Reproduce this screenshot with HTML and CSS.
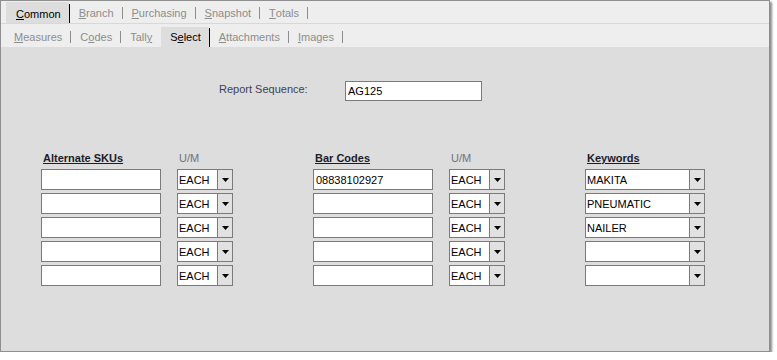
FILE: index.html
```html
<!DOCTYPE html>
<html lang="en">
<head>
  <meta charset="UTF-8" />
  <title>Item - Select</title>
  <link rel="stylesheet" href="styles.css">
</head>
<body>
  <div class="window">
    <div class="tabrow row1">
      <span class="tab active first"><u>C</u>ommon</span><span class="sep dark"></span>
      <span class="tab"><u>B</u>ranch</span><span class="sep"></span>
      <span class="tab"><u>P</u>urchasing</span><span class="sep"></span>
      <span class="tab"><u>S</u>napshot</span><span class="sep"></span>
      <span class="tab"><u>T</u>otals</span><span class="sep"></span>
    </div>
    <div class="tabrow row2">
      <span class="tab"><u>M</u>easures</span><span class="sep"></span>
      <span class="tab">C<u>o</u>des</span><span class="sep"></span>
      <span class="tab">Tall<u>y</u></span><span class="sep hide"></span>
      <span class="tab active">S<u>e</u>lect</span><span class="sep dark"></span>
      <span class="tab"><u>A</u>ttachments</span><span class="sep"></span>
      <span class="tab"><u>I</u>mages</span><span class="sep"></span>
    </div>

    <div class="panel">
      <div class="report">
        <label for="seq">Report Sequence:</label>
        <input id="seq" class="tb seq" value="AG125" readonly />
      </div>

      <div class="grid">
        <div class="hdr">Alternate SKUs</div>
        <div class="um">U/M</div>
        <div class="hdr">Bar Codes</div>
        <div class="um">U/M</div>
        <div class="hdr">Keywords</div>

        <input class="tb" value="" readonly />
        <div class="combo"><span class="val">EACH</span><span class="btn"><svg width="7" height="4" viewBox="0 0 7 4"><polygon points="0,0 7,0 3.5,4" /></svg></span></div>
        <input class="tb" value="08838102927" readonly />
        <div class="combo"><span class="val">EACH</span><span class="btn"><svg width="7" height="4" viewBox="0 0 7 4"><polygon points="0,0 7,0 3.5,4" /></svg></span></div>
        <div class="combo wide"><span class="val">MAKITA</span><span class="btn"><svg width="7" height="4" viewBox="0 0 7 4"><polygon points="0,0 7,0 3.5,4" /></svg></span></div>

        <input class="tb" value="" readonly />
        <div class="combo"><span class="val">EACH</span><span class="btn"><svg width="7" height="4" viewBox="0 0 7 4"><polygon points="0,0 7,0 3.5,4" /></svg></span></div>
        <input class="tb" value="" readonly />
        <div class="combo"><span class="val">EACH</span><span class="btn"><svg width="7" height="4" viewBox="0 0 7 4"><polygon points="0,0 7,0 3.5,4" /></svg></span></div>
        <div class="combo wide"><span class="val">PNEUMATIC</span><span class="btn"><svg width="7" height="4" viewBox="0 0 7 4"><polygon points="0,0 7,0 3.5,4" /></svg></span></div>

        <input class="tb" value="" readonly />
        <div class="combo"><span class="val">EACH</span><span class="btn"><svg width="7" height="4" viewBox="0 0 7 4"><polygon points="0,0 7,0 3.5,4" /></svg></span></div>
        <input class="tb" value="" readonly />
        <div class="combo"><span class="val">EACH</span><span class="btn"><svg width="7" height="4" viewBox="0 0 7 4"><polygon points="0,0 7,0 3.5,4" /></svg></span></div>
        <div class="combo wide"><span class="val">NAILER</span><span class="btn"><svg width="7" height="4" viewBox="0 0 7 4"><polygon points="0,0 7,0 3.5,4" /></svg></span></div>

        <input class="tb" value="" readonly />
        <div class="combo"><span class="val">EACH</span><span class="btn"><svg width="7" height="4" viewBox="0 0 7 4"><polygon points="0,0 7,0 3.5,4" /></svg></span></div>
        <input class="tb" value="" readonly />
        <div class="combo"><span class="val">EACH</span><span class="btn"><svg width="7" height="4" viewBox="0 0 7 4"><polygon points="0,0 7,0 3.5,4" /></svg></span></div>
        <div class="combo wide"><span class="val"></span><span class="btn"><svg width="7" height="4" viewBox="0 0 7 4"><polygon points="0,0 7,0 3.5,4" /></svg></span></div>

        <input class="tb" value="" readonly />
        <div class="combo"><span class="val">EACH</span><span class="btn"><svg width="7" height="4" viewBox="0 0 7 4"><polygon points="0,0 7,0 3.5,4" /></svg></span></div>
        <input class="tb" value="" readonly />
        <div class="combo"><span class="val">EACH</span><span class="btn"><svg width="7" height="4" viewBox="0 0 7 4"><polygon points="0,0 7,0 3.5,4" /></svg></span></div>
        <div class="combo wide"><span class="val"></span><span class="btn"><svg width="7" height="4" viewBox="0 0 7 4"><polygon points="0,0 7,0 3.5,4" /></svg></span></div>
      </div>
    </div>
  </div>
</body>
</html>
```

FILE: styles.css
```css
body {
  margin: 0;
  background: #ffffff;
  font-family: "Liberation Sans", Arial, sans-serif;
  font-size: 11px;
}

.window {
  width: 768px;
  height: 350px;
  border: 1px solid #8f8f8f;
  background: #dddddd;
  box-shadow: 2px 2px 2px rgba(0, 0, 0, 0.45);
  display: flex;
  flex-direction: column;
}

/* tab strips */
.tabrow {
  display: flex;
  align-items: center;
  background: #eeeeee;
}

.row1 {
  height: 22px;
  padding-left: 5px;
  border-bottom: 1px solid #d8d8d8;
}

.row2 {
  height: 23px;
  padding-left: 4px;
}

.tab {
  display: flex;
  align-items: center;
  height: 100%;
  padding: 2px 8px 0 9px;
  box-sizing: border-box;
  color: #8d8d8d;
}

.tab u {
  text-decoration-thickness: 1px;
}

.tab.active {
  color: #000000;
  background: #dddddd;
  align-self: flex-end;
}

.row1 .tab.active {
  height: 21px;
}

.row2 .tab.active {
  height: 20px;
  padding-top: 0;
}

.tab.first {
  padding-left: 10px;
}

.sep {
  width: 1px;
  height: 12px;
  margin-top: 2px;
  background: #8d8d8d;
}

.sep.dark {
  background: #000000;
  height: 19px;
  margin-top: 0;
  align-self: flex-end;
}

.sep.hide {
  background: transparent;
}

/* panel */
.panel {
  flex: 1;
  padding: 34px 0 0 40px;
}

.report {
  display: flex;
  align-items: flex-start;
  margin-left: 178px;
}

.report label {
  width: 126px;
  padding-top: 2px;
  color: #3f3f55;
}

.tb {
  width: 120px;
  height: 21px;
  margin: 0;
  box-sizing: border-box;
  border: 1px solid #7a7a7a;
  background: #ffffff;
  padding: 0 2px;
  font: inherit;
  color: #000000;
  outline: none;
}

.tb.seq {
  width: 137px;
  height: 20px;
}

.grid {
  display: grid;
  grid-template-columns: repeat(5, 136px);
  grid-template-rows: 16px;
  grid-auto-rows: 21px;
  row-gap: 3px;
  margin-top: 49px;
}

.hdr {
  padding-left: 2px;
  font-weight: bold;
  text-decoration: underline;
  color: #1c1c2c;
  line-height: 16px;
}

.um {
  padding-left: 2px;
  color: #707082;
  line-height: 16px;
}

.combo {
  display: flex;
  width: 56px;
  height: 21px;
  box-sizing: border-box;
  border: 1px solid #7a7a7a;
  background: #ffffff;
}

.combo.wide {
  width: 120px;
}

.combo .val {
  flex: 1;
  display: flex;
  align-items: center;
  padding-left: 1px;
  color: #000000;
}

.combo .btn {
  width: 15px;
  box-sizing: border-box;
  border-left: 1px solid #7a7a7a;
  background: #e1e1e1;
  display: flex;
  align-items: center;
  justify-content: center;
}

.combo .btn svg {
  fill: #000000;
}
```
